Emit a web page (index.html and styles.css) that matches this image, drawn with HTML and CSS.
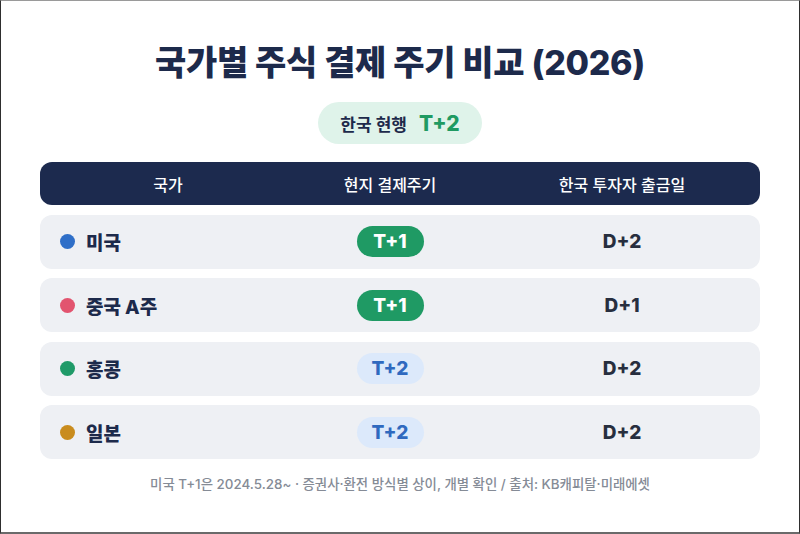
FILE: index.html
```html
<!DOCTYPE html>
<html lang="ko">
<head>
<meta charset="utf-8">
<link rel="stylesheet" href="styles.css">
</head>
<body>
<div class="frame">
  <h1 class="title">국가별 주식 결제 주기 비교 (2026)</h1>
  <div class="pill"><span class="pill-label">한국 현행</span><span class="pill-value">T+2</span></div>
  <div class="table">
    <div class="head">
      <div class="cell">국가</div>
      <div class="cell">현지 결제주기</div>
      <div class="cell">한국 투자자 출금일</div>
    </div>
    <div class="row">
      <div class="cell country"><span class="dot dot-blue"></span>미국</div>
      <div class="cell"><span class="badge badge-green">T+1</span></div>
      <div class="cell value">D+2</div>
    </div>
    <div class="row">
      <div class="cell country"><span class="dot dot-pink"></span>중국 A주</div>
      <div class="cell"><span class="badge badge-green">T+1</span></div>
      <div class="cell value">D+1</div>
    </div>
    <div class="row">
      <div class="cell country"><span class="dot dot-green"></span>홍콩</div>
      <div class="cell"><span class="badge badge-blue">T+2</span></div>
      <div class="cell value">D+2</div>
    </div>
    <div class="row">
      <div class="cell country"><span class="dot dot-gold"></span>일본</div>
      <div class="cell"><span class="badge badge-blue">T+2</span></div>
      <div class="cell value">D+2</div>
    </div>
  </div>
  <p class="note">미국 T+1은 2024.5.28~ · 증권사·환전 방식별 상이, 개별 확인 / 출처: KB캐피탈·미래에셋</p>
</div>
</body>
</html>
```
FILE: styles.css
```css
* { box-sizing: border-box; }
html, body { margin: 0; padding: 0; background: #fff; }
body {
  font-family: Inter, "Noto Sans CJK KR", "Noto Sans", sans-serif;
  color: #1d2a4b;
}
.frame {
  width: 800px;
  height: 534px;
  border: 1px solid #2e2e2e;
  border-top-color: #9a9a9a;
  border-bottom: 2px solid #6a6a6a;
  padding: 0 39px;
  display: flex;
  flex-direction: column;
  align-items: center;
}
.title {
  margin: 38px 0 0;
  font-size: 34px;
  font-weight: 800;
  line-height: 48px;
  letter-spacing: -0.3px;
  color: #1d2a4b;
}
.pill {
  margin-top: 15px;
  height: 42px;
  padding: 0 22px;
  border-radius: 21px;
  background: #dff3ea;
  display: flex;
  align-items: center;
  gap: 12px;
}
.pill-label { font-size: 17px; font-weight: 700; color: #1d2a4b; }
.pill-value { font-size: 21px; font-weight: 800; color: #1f9a62; }
.table {
  width: 720px;
  margin-top: 18px;
  display: flex;
  flex-direction: column;
  gap: 9.6px;
}
.head, .row {
  display: grid;
  grid-template-columns: 256px 188px 1fr;
  align-items: center;
}
.head {
  height: 43px;
  background: #1c2a4e;
  border-radius: 12px;
  color: #fff;
  font-size: 16px;
  font-weight: 500;
}
.head .cell { text-align: center; display: block; }
.row {
  height: 54px;
  background: #eef0f4;
  border-radius: 12px;
}
.cell { display: flex; justify-content: center; align-items: center; }
.country {
  justify-content: flex-start;
  padding-left: 20px;
  gap: 11px;
  font-size: 19px;
  font-weight: 800;
  color: #1d2a4b;
}
.dot { width: 15px; height: 15px; border-radius: 50%; display: inline-block; }
.dot-blue { background: #2f6fc8; }
.dot-pink { background: #e2546f; }
.dot-green { background: #1f9a68; }
.dot-gold { background: #c98c1e; }
.badge {
  display: inline-flex;
  align-items: center;
  justify-content: center;
  height: 31px;
  width: 67px;
  border-radius: 16px;
  font-size: 19px;
  font-weight: 800;
}
.badge-green { background: #1f9a64; color: #fff; }
.badge-blue { background: #dce9fb; color: #2f69bf; }
.value { font-size: 19px; font-weight: 800; color: #272e3e; }
.note {
  margin: 15px 0 0;
  font-size: 13.4px;
  line-height: 20px;
  color: #858b96;
  font-weight: 500;
}
```
